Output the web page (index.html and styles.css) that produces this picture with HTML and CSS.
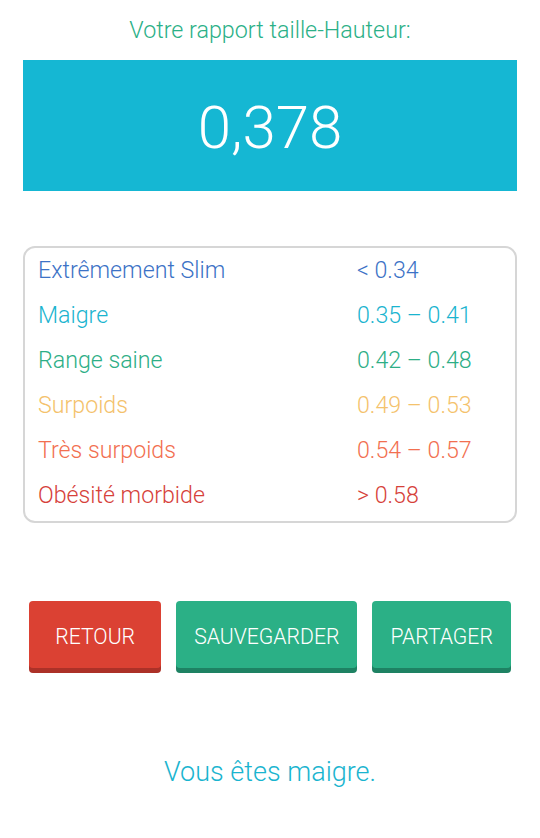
FILE: index.html
```html
<!DOCTYPE html>
<html lang="fr">
<head>
    <meta charset="UTF-8">
    <meta name="viewport" content="width=device-width, initial-scale=1.0">
    <title>Rapport taille-Hauteur</title>
    <link rel="stylesheet" href="styles.css">
</head>
<body>
    <!-- Result -->
    <h1 class="result-title">Votre rapport taille-Hauteur:</h1>
    <div class="result-box">0,378</div>

    <!-- Scale -->
    <div class="scale">
        <div class="scale-row slim">
            <span>Extrêmement Slim</span>
            <span>&lt; 0.34</span>
        </div>
        <div class="scale-row thin">
            <span>Maigre</span>
            <span>0.35 – 0.41</span>
        </div>
        <div class="scale-row healthy">
            <span>Range saine</span>
            <span>0.42 – 0.48</span>
        </div>
        <div class="scale-row overweight">
            <span>Surpoids</span>
            <span>0.49 – 0.53</span>
        </div>
        <div class="scale-row very-overweight">
            <span>Très surpoids</span>
            <span>0.54 – 0.57</span>
        </div>
        <div class="scale-row obese">
            <span>Obésité morbide</span>
            <span>&gt; 0.58</span>
        </div>
    </div>

    <!-- Actions -->
    <div class="actions">
        <button type="button" class="btn btn-red">RETOUR</button>
        <button type="button" class="btn btn-green">SAUVEGARDER</button>
        <button type="button" class="btn btn-green">PARTAGER</button>
    </div>

    <p class="verdict">Vous êtes maigre.</p>
</body>
</html>
```

FILE: styles.css
```css
body {
    font-family: Roboto, "Noto Sans", sans-serif;
    font-weight: 300;
    background-color: white;
    margin: 0;
    padding: 0;
}

/* Result */
.result-title {
    margin: 0;
    padding-top: 15px;
    font-size: 23.3px;
    font-weight: 300;
    line-height: 30px;
    text-align: center;
    color: #2bb087;
}

.result-box {
    margin: 15px 23px 0;
    padding-top: 4px;
    height: 127px;
    background-color: #15b7d3;
    color: white;
    font-size: 60px;
    font-weight: 300;
    display: flex;
    align-items: center;
    justify-content: center;
}

/* Scale */
.scale {
    margin: 55px 23px 0;
    padding: 0 13px 3px;
    border: 2px solid #d6d6d6;
    border-radius: 12px;
}

.scale-row {
    display: grid;
    grid-template-columns: 319px 1fr;
    font-size: 23.2px;
    line-height: 45px;
}

.slim { color: #3c72c6; }
.thin { color: #1ab4cf; }
.healthy { color: #2dae86; }
.overweight { color: #f4c26c; }
.very-overweight { color: #f26f50; }
.obese { color: #d6413a; }

/* Actions */
.actions {
    margin-top: 78px;
    display: flex;
    justify-content: center;
    gap: 15px;
}

.btn {
    font-family: Roboto, "Noto Sans", sans-serif;
    font-weight: 300;
    font-size: 21.2px;
    color: white;
    height: 67px;
    min-width: 132px;
    padding: 4px 18px 0;
    border: none;
    border-radius: 4px;
    cursor: pointer;
}

.btn-red {
    background-color: #db4133;
    box-shadow: 0 5px 0 #ac3128;
}

.btn-green {
    background-color: #2bb086;
    box-shadow: 0 5px 0 #1e8263;
}

.verdict {
    margin: 84px 0 0;
    text-align: center;
    font-size: 27px;
    line-height: 40px;
    color: #1ab4cf;
}
```
